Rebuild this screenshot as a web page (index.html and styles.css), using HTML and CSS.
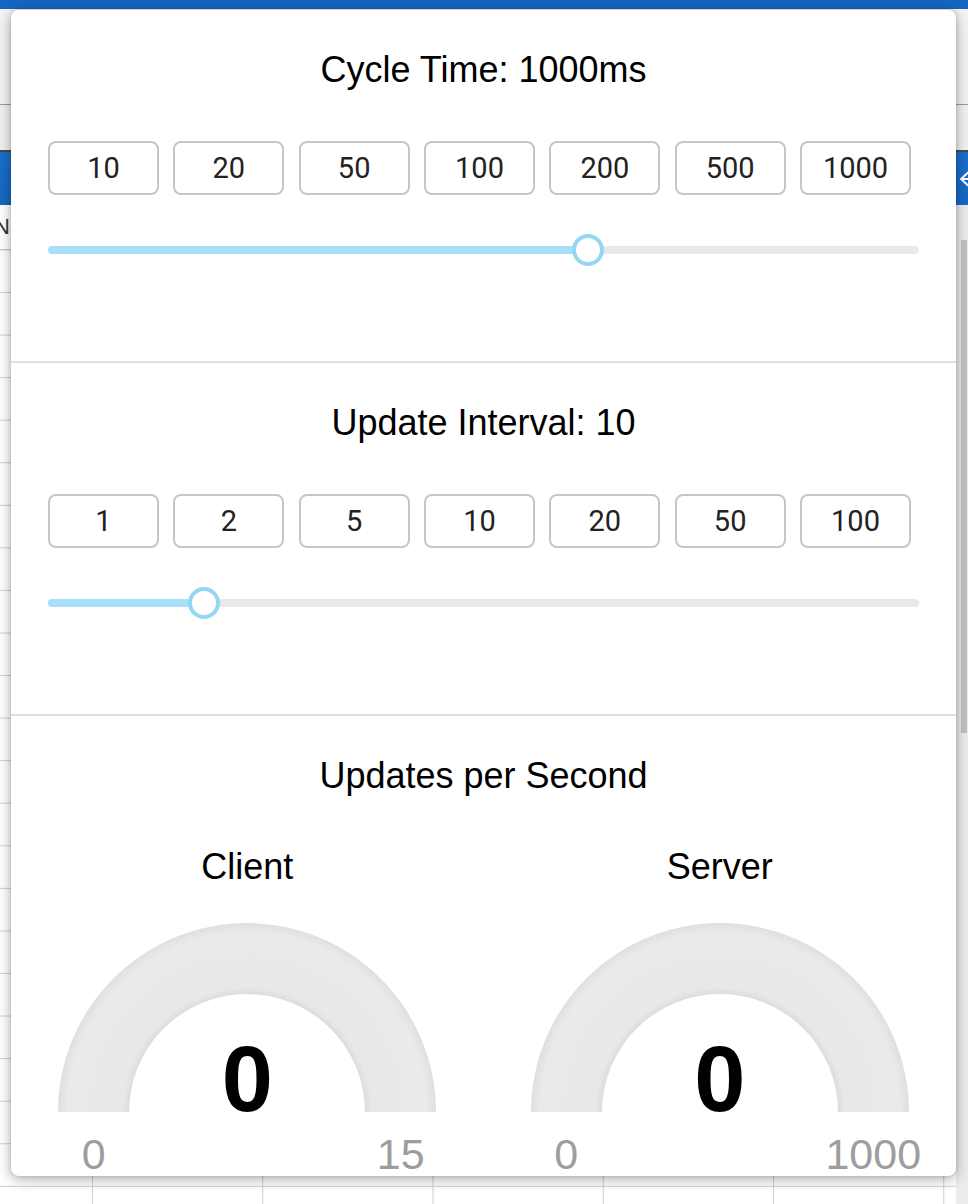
FILE: index.html
```html
<!DOCTYPE html>
<html>
<head>
<meta charset="utf-8">
<link rel="stylesheet" href="styles.css">
</head>
<body>
<div class="app">
  <div class="topbar"></div>
  <div class="toolbar"></div>
  <div class="subbar"></div>
  <div class="bluebar">
    <svg class="chev" width="14" height="30" viewBox="0 0 14 30"><polyline points="13,6 3,15 13,24" fill="none" stroke="#fff" stroke-width="2"/><line x1="3" y1="15" x2="14" y2="15" stroke="#fff" stroke-width="2"/></svg>
  </div>
  <div class="table">
    <div class="thead"><span class="th">Name</span></div>
    <div class="tbody"></div>
  </div>
  <div class="scroll-track"><div class="scroll-thumb"></div></div>
</div>

<div class="dialog">
  <section class="panel">
    <h2 class="panel-title">Cycle Time: 1000ms</h2>
    <div class="btn-row">
      <button class="btn">10</button>
      <button class="btn">20</button>
      <button class="btn">50</button>
      <button class="btn">100</button>
      <button class="btn">200</button>
      <button class="btn">500</button>
      <button class="btn">1000</button>
    </div>
    <div class="slider">
      <div class="track"><div class="fill" style="width:62.03%"></div></div>
      <div class="thumb" style="left:62.03%"></div>
    </div>
  </section>

  <section class="panel">
    <h2 class="panel-title">Update Interval: 10</h2>
    <div class="btn-row">
      <button class="btn">1</button>
      <button class="btn">2</button>
      <button class="btn">5</button>
      <button class="btn">10</button>
      <button class="btn">20</button>
      <button class="btn">50</button>
      <button class="btn">100</button>
    </div>
    <div class="slider">
      <div class="track"><div class="fill" style="width:17.93%"></div></div>
      <div class="thumb" style="left:17.93%"></div>
    </div>
  </section>

  <section class="panel panel-last">
    <h2 class="panel-title">Updates per Second</h2>
    <div class="gauges">
      <div class="gauge-col">
        <div class="gauge-title">Client</div>
        <div class="gauge-wrap">
          <svg class="gauge" width="378" height="189" viewBox="0 0 378 189">
            <defs>
              <radialGradient id="g1" cx="189" cy="189" r="189" gradientUnits="userSpaceOnUse">
                <stop offset="0.62" stop-color="#dcdbdc"/>
                <stop offset="0.66" stop-color="#e9e8e9"/>
                <stop offset="0.95" stop-color="#ebeaeb"/>
                <stop offset="1" stop-color="#e0dfe0"/>
              </radialGradient>
            </defs>
            <path d="M0,189 A189,189 0 0 1 378,189 L307,189 A118,118 0 0 0 71,189 Z" fill="url(#g1)"/>
          </svg>
          <div class="gauge-value">0</div>
        </div>
        <div class="gauge-labels"><span class="glabel">0</span><span class="glabel">15</span></div>
      </div>
      <div class="gauge-col">
        <div class="gauge-title">Server</div>
        <div class="gauge-wrap">
          <svg class="gauge" width="378" height="189" viewBox="0 0 378 189">
            <defs>
              <radialGradient id="g2" cx="189" cy="189" r="189" gradientUnits="userSpaceOnUse">
                <stop offset="0.62" stop-color="#dcdbdc"/>
                <stop offset="0.66" stop-color="#e9e8e9"/>
                <stop offset="0.95" stop-color="#ebeaeb"/>
                <stop offset="1" stop-color="#e0dfe0"/>
              </radialGradient>
            </defs>
            <path d="M0,189 A189,189 0 0 1 378,189 L307,189 A118,118 0 0 0 71,189 Z" fill="url(#g2)"/>
          </svg>
          <div class="gauge-value">0</div>
        </div>
        <div class="gauge-labels"><span class="glabel">0</span><span class="glabel">1000</span></div>
      </div>
    </div>
  </section>
</div>
</body>
</html>
```

FILE: styles.css
```css
* { box-sizing: border-box; }

html, body {
  margin: 0;
  padding: 0;
}

body {
  width: 968px;
  height: 1204px;
  overflow: hidden;
  background: #ffffff;
  font-family: "Liberation Sans", Arial, sans-serif;
  position: relative;
}

/* ---------- background application ---------- */
.app {
  width: 968px;
  height: 1204px;
  position: relative;
}

.topbar {
  height: 9px;
  background: #1565c0;
}

.toolbar {
  height: 96px;
  background: #f3f3f3;
  border-bottom: 1px solid #9a9a9a;
}

.subbar {
  height: 47px;
  background: #f1f1f1;
  border-bottom: 2px solid #4a4a4a;
}

.bluebar {
  height: 53px;
  background: linear-gradient(#1b6fcb, #1767c2);
  display: flex;
  align-items: center;
  justify-content: flex-end;
}

.chev {
  margin-right: -4px;
}

.table {
  height: 999px;
  background: #ffffff;
}

.thead {
  height: 45px;
  border-bottom: 1px solid #c8c8c8;
  display: flex;
  align-items: center;
}

.th {
  margin-left: -6px;
  font-size: 22px;
  color: #333;
}

.tbody {
  height: 954px;
  background-image:
    linear-gradient(to bottom, #cfcfcf 0, #cfcfcf 1px, transparent 1px),
    linear-gradient(to right, #cfcfcf 0, #cfcfcf 1px, transparent 1px);
  background-size: 100% 42.57px, 170.25px 100%;
  background-position: 0 42px, 92px 0;
}

.scroll-track {
  position: absolute;
  right: 0;
  top: 205px;
  width: 12px;
  bottom: 0;
  background: #ececec;
}

.scroll-thumb {
  margin: 35px 0 0 5px;
  width: 6px;
  height: 493px;
  background: #c1c1c1;
}

/* ---------- dialog ---------- */
.dialog {
  position: absolute;
  top: 10px;
  left: 11px;
  width: 945px;
  height: 1166px;
  background: #ffffff;
  border-radius: 8px;
  box-shadow: 0 3px 14px rgba(0, 0, 0, 0.32), 0 0 4px rgba(0, 0, 0, 0.15);
  overflow: hidden;
}

.panel {
  height: 353px;
  padding: 40px 37px 0 37px;
  border-bottom: 2px solid #dedede;
}

.panel-last {
  border-bottom: none;
  height: auto;
  padding: 40px 0 0 0;
}

.panel-title {
  margin: 0;
  font-weight: normal;
  font-size: 36px;
  line-height: 40px;
  color: #000;
  text-align: center;
}

.btn-row {
  margin-top: 51px;
  padding-right: 8px;
  display: grid;
  grid-template-columns: repeat(7, 1fr);
  column-gap: 14.3px;
}

.btn {
  height: 54px;
  margin: 0;
  padding: 0;
  background: #ffffff;
  border: 2px solid #c6c6c6;
  border-radius: 8px;
  font-family: Roboto, "Liberation Sans", sans-serif;
  font-size: 29px;
  color: #222222;
  display: flex;
  align-items: center;
  justify-content: center;
}

.slider {
  position: relative;
  margin-top: 39px;
  height: 32px;
  display: flex;
  align-items: center;
}

.track {
  width: 100%;
  height: 8px;
  border-radius: 4px;
  background: #e9e9e9;
  overflow: hidden;
}

.fill {
  height: 100%;
  background: #a9e0f9;
}

.thumb {
  position: absolute;
  top: 0;
  width: 32px;
  height: 32px;
  margin-left: -16px;
  border-radius: 50%;
  border: 4px solid #95d6f6;
  background: #ffffff;
}

/* ---------- gauges ---------- */
.gauges {
  display: grid;
  grid-template-columns: 1fr 1fr;
  margin-top: 51px;
}

.gauge-col {
  display: flex;
  flex-direction: column;
  align-items: center;
}

.gauge-title {
  font-size: 36px;
  line-height: 40px;
  color: #000;
}

.gauge-wrap {
  position: relative;
  width: 378px;
  height: 189px;
  margin-top: 36px;
}

.gauge {
  display: block;
}

.gauge-value {
  position: absolute;
  left: 0;
  right: 0;
  top: 110px;
  text-align: center;
  font-weight: bold;
  font-size: 92px;
  line-height: 92px;
  color: #010101;
}

.gauge-labels {
  width: 378px;
  margin-top: 23px;
  display: flex;
  justify-content: space-between;
}

.glabel {
  width: 71px;
  display: flex;
  justify-content: center;
  white-space: nowrap;
  font-size: 43px;
  line-height: 38px;
  color: #9d9d9d;
}
```
